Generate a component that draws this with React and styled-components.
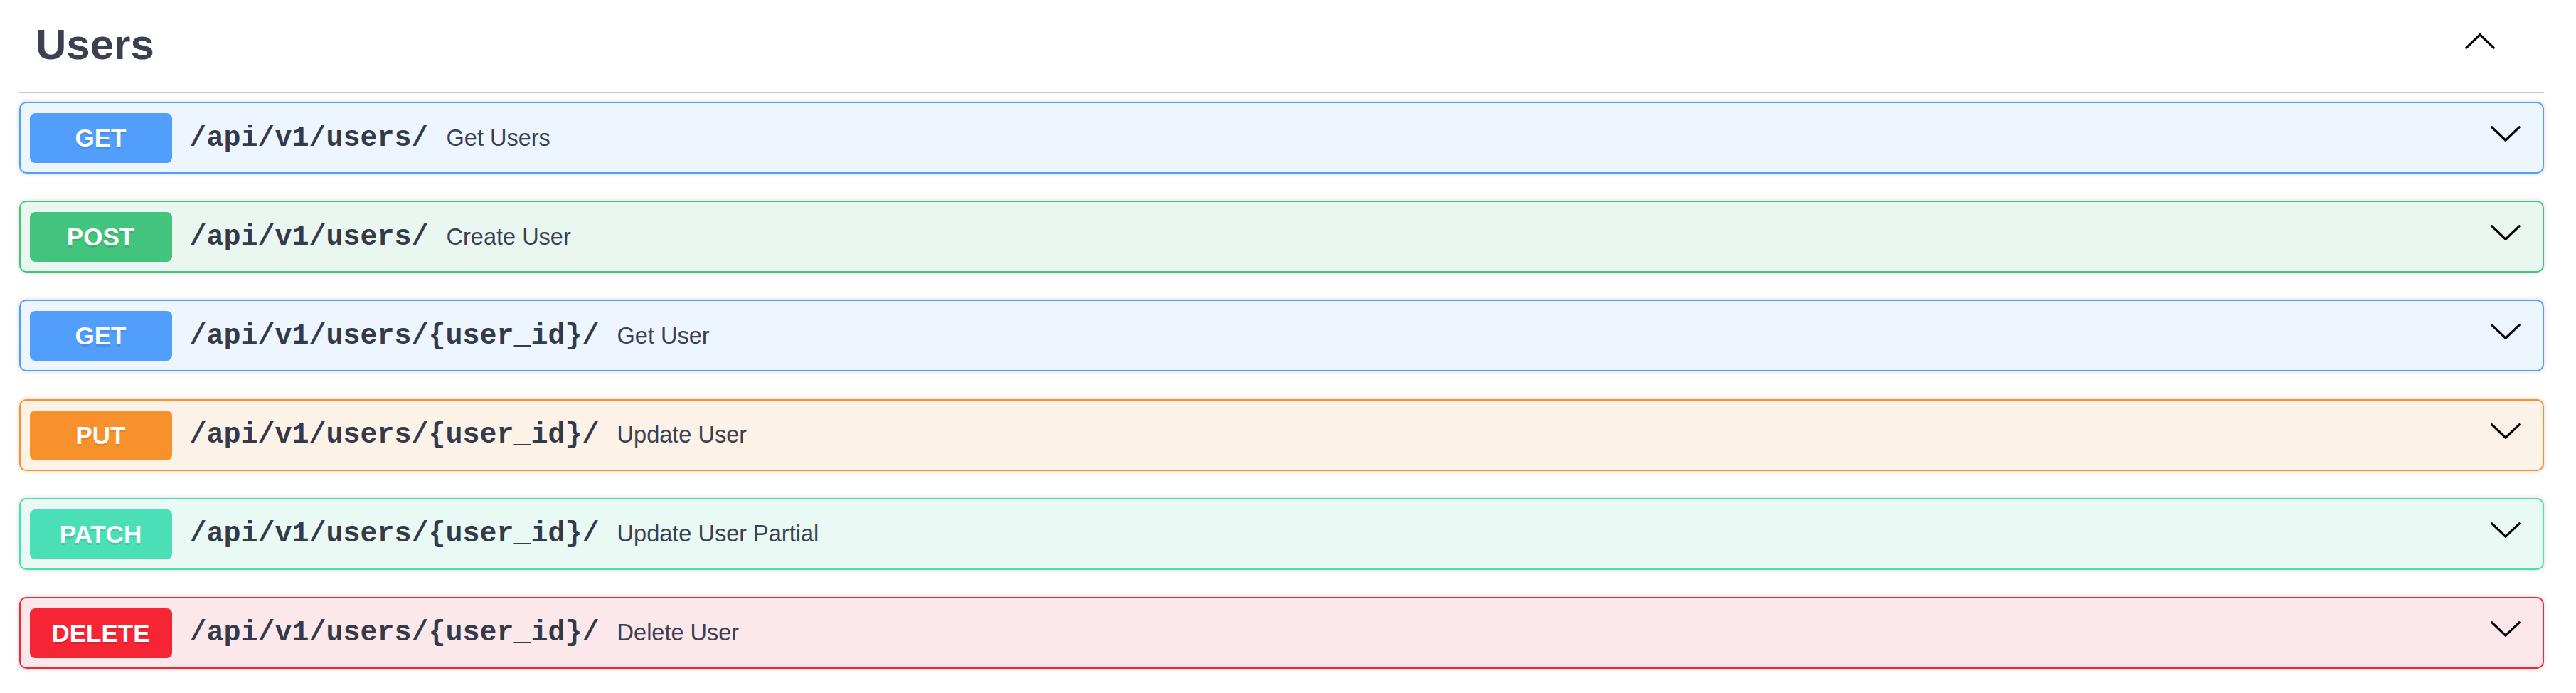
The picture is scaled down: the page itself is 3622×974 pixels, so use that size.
import React from 'react';
import styled, { createGlobalStyle } from 'styled-components';

const GlobalStyle = createGlobalStyle`
    html, body {
        margin: 0;
        padding: 0;
        background: #ffffff;
    }
`;

const methods = {
    get: { main: '#519efd', bg: '#edf5fe' },
    post: { main: '#43c47e', bg: '#eaf7f0' },
    put: { main: '#f8902b', bg: '#fdf2e7' },
    patch: { main: '#4bdfb5', bg: '#e9faf4' },
    delete: { main: '#f62536', bg: '#fce8ea' },
};

const operations = [
    { method: 'get', path: '/api/v1/users/', summary: 'Get Users' },
    { method: 'post', path: '/api/v1/users/', summary: 'Create User' },
    { method: 'get', path: '/api/v1/users/{user_id}/', summary: 'Get User' },
    { method: 'put', path: '/api/v1/users/{user_id}/', summary: 'Update User' },
    { method: 'patch', path: '/api/v1/users/{user_id}/', summary: 'Update User Partial' },
    { method: 'delete', path: '/api/v1/users/{user_id}/', summary: 'Delete User' },
];

const Page = styled.div`
    padding: 0 45px 0 27px;
    font-family: 'Liberation Sans', Arial, sans-serif;
    color: #3b4151;
`;

const TagHeader = styled.div`
    display: flex;
    align-items: center;
    justify-content: space-between;
    height: 130.5px;
    box-sizing: border-box;
    padding: 0 65px 4.5px 23px;
    border-bottom: 2.5px solid rgba(59, 65, 81, 0.3);
    margin-bottom: 12.5px;
`;

const TagTitle = styled.h3`
    margin: 0;
    font-size: 60px;
    font-weight: 700;
    color: #3b4151;
`;

const ToggleButton = styled.button`
    display: flex;
    padding: 0;
    border: none;
    background: none;
    margin-bottom: ${(p) => p.$lift}px;
    margin-right: ${(p) => p.$right}px;
    cursor: pointer;
`;

const OpBlock = styled.div`
    border: 2px solid ${(p) => methods[p.$method].main};
    background: ${(p) => methods[p.$method].bg};
    border-radius: 10px;
    box-shadow: 0 0 7px rgba(0, 0, 0, 0.16);
    margin-bottom: 38.2px;
`;

const Summary = styled.div`
    display: flex;
    align-items: center;
    height: 97px;
    box-sizing: border-box;
    padding: 14px 12.5px 13px 12.5px;
`;

const MethodBadge = styled.span`
    flex: none;
    width: 200px;
    height: 70px;
    display: flex;
    align-items: center;
    justify-content: center;
    border-radius: 7.5px;
    background: ${(p) => methods[p.$method].main};
    color: #ffffff;
    font-size: 35px;
    font-weight: 700;
    text-shadow: 0 2.5px 0 rgba(0, 0, 0, 0.1);
`;

const PathText = styled.span`
    padding: 0 25px;
    font-family: 'Liberation Mono', 'Courier New', monospace;
    font-size: 40px;
    font-weight: 700;
    color: #343a48;
    white-space: nowrap;
`;

const Description = styled.span`
    flex: 1;
    font-size: 32.5px;
    color: #3b4151;
`;

function Chevron({ up }) {
    return (
        <svg width="42" height="22" viewBox="0 0 42 22">
            <polyline
                points={up ? '1.8,20.2 21,1.8 40.2,20.2' : '1.8,1.8 21,20.2 40.2,1.8'}
                fill="none"
                stroke="#000000"
                strokeWidth="3.2"
                strokeLinecap="round"
                strokeLinejoin="miter"
            />
        </svg>
    );
}

function Operation({ method, path, summary }) {
    return (
        <OpBlock $method={method}>
            <Summary>
                <MethodBadge $method={method}>{method.toUpperCase()}</MethodBadge>
                <PathText>{path}</PathText>
                <Description>{summary}</Description>
                <ToggleButton $lift={12} $right={18.5}>
                    <Chevron />
                </ToggleButton>
            </Summary>
        </OpBlock>
    );
}

export default function App() {
    return (
        <Page>
            <GlobalStyle />
            <TagHeader>
                <TagTitle>Users</TagTitle>
                <ToggleButton $lift={7.5} $right={4}>
                    <Chevron up />
                </ToggleButton>
            </TagHeader>
            {operations.map((op, i) => (
                <Operation key={i} {...op} />
            ))}
        </Page>
    );
}
